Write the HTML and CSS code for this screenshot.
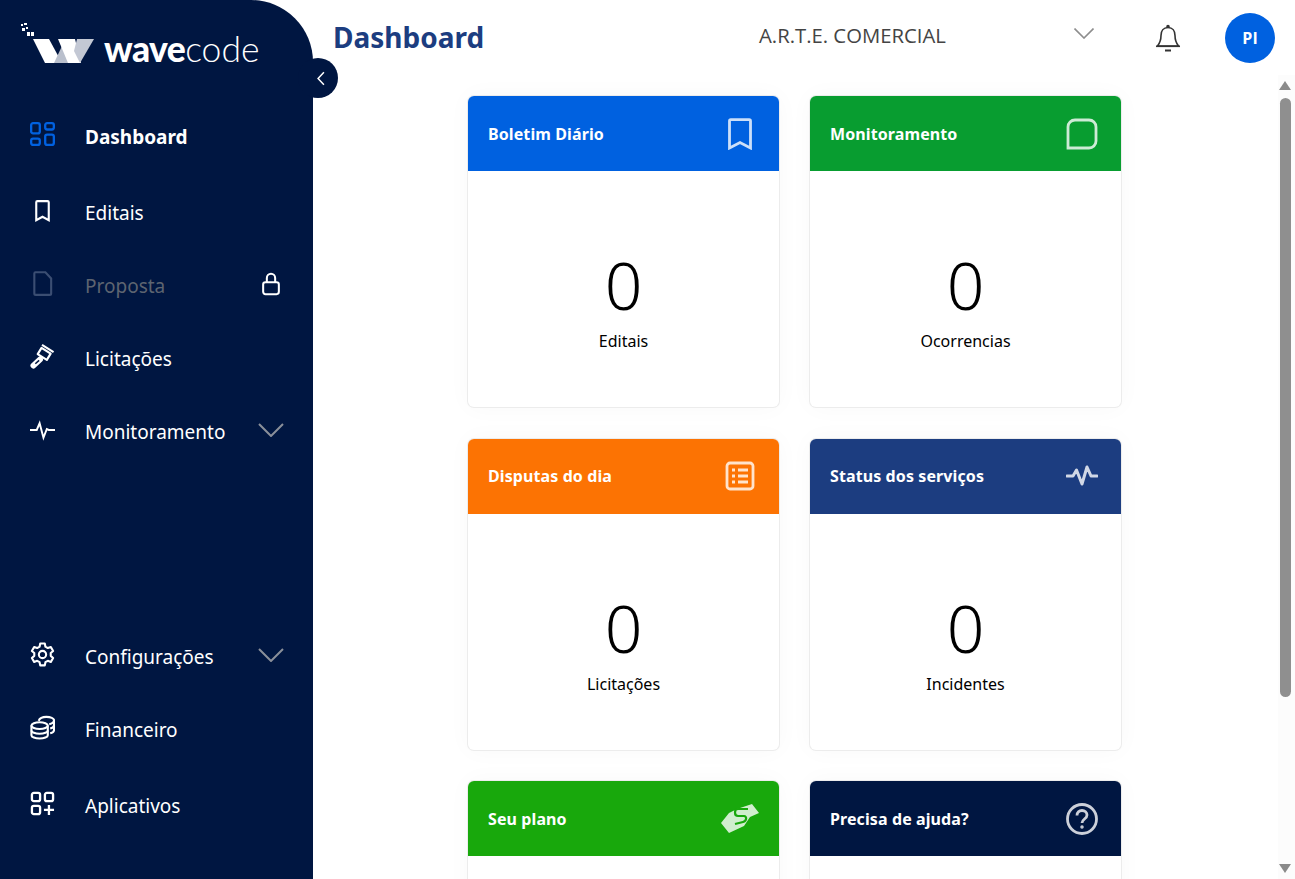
FILE: index.html
```html
<!DOCTYPE html>
<html lang="pt-BR">
<head>
<meta charset="UTF-8">
<meta name="viewport" content="width=device-width, initial-scale=1.0">
<title>Dashboard - wavecode</title>
<link rel="stylesheet" href="styles.css">
</head>
<body>

<aside class="sidebar">
  <div class="logo">
    <svg class="logo-dots" viewBox="0 0 13 13" fill="#fff">
      <rect x="0" y="1" width="2" height="2"/><rect x="3" y="0" width="3" height="2"/><rect x="1" y="5" width="3" height="3"/>
      <rect x="5" y="4" width="2" height="2"/><rect x="6" y="9" width="3" height="4"/><rect x="10" y="9" width="3" height="4"/>
    </svg>
    <svg class="logo-mark" viewBox="0 0 61 24">
      <polygon points="0,0 16,0 29,24 12,24" fill="#fff"/>
      <polygon points="21,24 29,7 37,24" fill="#b9bfcc"/>
      <polygon points="25,0 42,0 48,24 35,24" fill="#fff"/>
      <polygon points="44,0 61,0 47,24 41,12" fill="#c3c8d4"/>
    </svg>
    <span class="logo-text"><b>wave</b>code</span>
  </div>
  <button class="collapse-btn">
    <svg viewBox="0 0 12 20" width="10" height="17" fill="none" stroke="#fff" stroke-width="1.8"><path d="M9.5 2.5 2.5 10l7 7.5"/></svg>
  </button>

  <nav class="menu">
    <a class="menu-item active first">
      <svg class="menu-icon" viewBox="0 0 26 26" fill="none" stroke="#0061e0" stroke-width="2.4">
        <rect x="1.2" y="1.2" width="9" height="10.6" rx="2"/><rect x="15.8" y="1.2" width="9" height="6.6" rx="2"/>
        <rect x="1.2" y="17.2" width="9" height="6.6" rx="2"/><rect x="15.8" y="13.2" width="9" height="10.6" rx="2"/>
      </svg>
      <span>Dashboard</span>
    </a>
    <a class="menu-item">
      <svg class="menu-icon" viewBox="0 0 26 26" fill="none" stroke="#fff" stroke-width="2.2"><path d="M6.5 4.5c0-.8.5-1.2 1.2-1.2h10.6c.7 0 1.2.4 1.2 1.2V23L13 19.5 6.5 23z"/></svg>
      <span>Editais</span>
    </a>
    <a class="menu-item disabled">
      <svg class="menu-icon" viewBox="0 0 26 26" fill="none" stroke="#3b4e72" stroke-width="2.2"><path d="M4.5 2.5c0-.6.4-1.2 1.2-1.2H16l6 6.5v15.500c0 1-.7 1.500-1.500 1.500H6c-1 0-1.500-.6-1.500-1.500z"/></svg>
      <span>Proposta</span>
      <svg class="menu-end" viewBox="0 0 26 26" fill="none" stroke="#fff" stroke-width="2.2"><rect x="4.5" y="11" width="17" height="13" rx="2.5"/><path d="M8.5 11V6.5a4.5 4.5 0 0 1 9 0V11"/></svg>
    </a>
    <a class="menu-item">
      <svg class="menu-icon" viewBox="0 0 26 26" fill="none" stroke="#fff" stroke-width="2.2" stroke-linejoin="round">
        <path d="M12 4l9.500 6-4 6.500L8 10.500z"/><path d="M12.500 1 24.500 8.500"/>
        <path d="M3.500 22.500l7-6.500" stroke-width="6" stroke-linecap="round"/>
        <path d="M5.500 20.500l4-3.500" stroke="#001641" stroke-width="1.600"/>
      </svg>
      <span>Licitações</span>
    </a>
    <a class="menu-item">
      <svg class="menu-icon" viewBox="0 0 26 26" fill="none" stroke="#fff" stroke-width="2"><path d="M0 13.500h7l3-7 4 15 3.500-9 2 1H26"/></svg>
      <span>Monitoramento</span>
      <svg class="menu-chevron" viewBox="0 0 26 14" fill="none" stroke="#8a8f9a" stroke-width="2"><path d="M1 1l12 12L25 1"/></svg>
    </a>
  </nav>

  <nav class="menu menu-bottom">
    <a class="menu-item">
      <svg class="menu-icon" viewBox="0 0 24 24" fill="none" stroke="#fff" stroke-width="2" stroke-linejoin="round">
        <circle cx="12" cy="12" r="3.5"/>
        <path d="M9.800 1.500h4.400l.6 3 2.300 1.300 2.900-1 2.200 3.800-2.300 2v2.700l2.300 2-2.200 3.800-2.900-1-2.300 1.300-.6 3H9.800l-.6-3-2.300-1.300-2.900 1-2.200-3.800 2.300-2v-2.700l-2.300-2L4 4.800l2.900 1 2.300-1.300z"/>
      </svg>
      <span>Configurações</span>
      <svg class="menu-chevron" viewBox="0 0 26 14" fill="none" stroke="#8a8f9a" stroke-width="2"><path d="M1 1l12 12L25 1"/></svg>
    </a>
    <a class="menu-item">
      <svg class="menu-icon" viewBox="0 0 26 26" fill="none" stroke="#fff" stroke-width="2.2">
        <ellipse cx="10" cy="11" rx="8.5" ry="3.5"/><path d="M1.500 11v10c0 2 3.800 3.500 8.500 3.500s8.500-1.500 8.500-3.500V11"/><path d="M1.500 16c0 2 3.800 3.500 8.500 3.500s8.500-1.500 8.500-3.500"/>
        <path d="M9 6c1-2.500 4-4 8-4 4.500 0 8 1.500 8 3.500S23 9 20 9.500"/><path d="M21 14c2.500-.5 4-1.500 4-3.500M21 19c2.500-.5 4-1.500 4-3.500V5.500"/>
      </svg>
      <span>Financeiro</span>
    </a>
    <a class="menu-item last">
      <svg class="menu-icon" viewBox="0 0 26 26" fill="none" stroke="#fff" stroke-width="2.4">
        <rect x="2" y="2" width="8.5" height="8.5" rx="2"/><rect x="15.5" y="2" width="8.5" height="8.5" rx="2"/>
        <rect x="2" y="15.5" width="8.5" height="8.5" rx="2"/><path d="M19.700 14.500v10.500M14.500 19.700H25"/>
      </svg>
      <span>Aplicativos</span>
    </a>
  </nav>
</aside>

<div class="main">
  <header class="topbar">
    <h1>Dashboard</h1>
    <div class="company">
      <span>A.R.T.E. COMERCIAL</span>
      <svg viewBox="0 0 20 11" width="20" height="11" fill="none" stroke="#8d8d8d" stroke-width="1.6"><path d="M.5.500 10 10 19.500.500"/></svg>
    </div>
    <svg class="bell" viewBox="0 0 26 28" fill="none" stroke="#333" stroke-width="1.6">
      <path d="M13 3.500c-4.500 0-7 3.500-7 8 0 5-1.500 8-3.500 10.500h21c-2-2.500-3.500-5.500-3.500-10.500 0-4.500-2.500-8-7-8z"/>
      <path d="M1 22.300h24"/><circle cx="13" cy="2.500" r="1" fill="#333"/><path d="M10 26.500h6" stroke-width="2"/>
    </svg>
    <div class="avatar">PI</div>
  </header>

  <div class="workspace">
    <div class="content">
      <div class="cards">
        <section class="card">
          <div class="card-head blue">
            <h2>Boletim Diário</h2>
            <svg class="card-icon" viewBox="0 0 32 32" fill="none" stroke-width="2.8"><path d="M5.500 3c0-.8.500-1.300 1.300-1.300h18.400c.8 0 1.300.5 1.300 1.300v27L16 24.500 5.500 30z"/></svg>
          </div>
          <div class="card-body"><strong>0</strong><span>Editais</span></div>
        </section>
        <section class="card">
          <div class="card-head green">
            <h2>Monitoramento</h2>
            <svg class="card-icon" viewBox="0 0 32 32" fill="none" stroke-width="2.8"><path d="M2 30V9a7 7 0 0 1 7-7h14a7 7 0 0 1 7 7v14a7 7 0 0 1-7 7z"/></svg>
          </div>
          <div class="card-body"><strong>0</strong><span>Ocorrencias</span></div>
        </section>
        <section class="card">
          <div class="card-head orange">
            <h2>Disputas do dia</h2>
            <svg class="card-icon" viewBox="0 0 32 32" fill="none" stroke-width="2.8">
              <rect x="3" y="3" width="26" height="26" rx="3"/><path d="M8 10h3M14 10h10M8 16h3M14 16h10M8 22h3M14 22h10"/>
            </svg>
          </div>
          <div class="card-body"><strong>0</strong><span>Licitações</span></div>
        </section>
        <section class="card">
          <div class="card-head navy">
            <h2>Status dos serviços</h2>
            <svg class="card-icon" viewBox="0 0 32 32" fill="none" stroke-width="3" stroke-linecap="round" stroke-linejoin="round"><path d="M1 16h6l3.500-6 5.500 14 5-17 4 9h6"/></svg>
          </div>
          <div class="card-body"><strong>0</strong><span>Incidentes</span></div>
        </section>
        <section class="card">
          <div class="card-head lime">
            <h2>Seu plano</h2>
            <svg class="card-icon hand" viewBox="0 0 38 32">
              <path d="M31 1l7 9-9 4-6 9-15 7-8-10 8-10 8-4z"/>
              <path class="hand-line" d="M27 6H17c-4 0-4 7 0 7h6c3 0 3 5-1 6l-8 2"/>
            </svg>
          </div>
          <div class="card-body"></div>
        </section>
        <section class="card">
          <div class="card-head dark">
            <h2>Precisa de ajuda?</h2>
            <svg class="card-icon" viewBox="0 0 32 32" fill="none" stroke-width="2.8">
              <circle cx="16" cy="16" r="14.5"/><path d="M11 12.500c0-3 2.200-5 5-5s5 2 5 4.500c0 4-5 4-5 8"/><circle cx="16" cy="24" r="1" stroke-width="1.5"/>
            </svg>
          </div>
          <div class="card-body"></div>
        </section>
      </div>
    </div>
    <div class="scrollbar">
      <div class="scroll-up"></div>
      <div class="scroll-thumb"></div>
      <div class="scroll-down"></div>
    </div>
  </div>
</div>

</body>
</html>
```

FILE: styles.css
```css
* {
  box-sizing: border-box;
}

body {
  display: flex;
  height: 100vh;
  margin: 0;
  overflow: hidden;
  font-family: "Noto Sans", "Open Sans", sans-serif;
  background-color: #fff;
  color: #000;
}

.sidebar {
  position: relative;
  display: flex;
  flex-direction: column;
  flex: 0 0 313px;
  background-color: #001641;
  border-top-right-radius: 62px;
  color: #fff;
}

.logo {
  position: relative;
  display: flex;
  align-items: center;
  height: 105px;
  padding: 0 0 7px 33px;
}

.logo-dots {
  position: absolute;
  top: 23px;
  left: 21px;
  width: 13px;
  height: 13px;
}

.logo-mark {
  width: 61px;
  height: 24px;
  margin-right: 10px;
  margin-top: 3px;
}

.logo-text {
  font-family: "Lato", sans-serif;
  font-size: 35.5px;
  font-weight: 300;
  line-height: 1;
}

.logo-text b {
  font-weight: 900;
  letter-spacing: -0.6px;
}

.collapse-btn {
  position: absolute;
  top: 58px;
  left: 298px;
  display: flex;
  align-items: center;
  width: 40px;
  height: 40px;
  padding: 0 0 0 18px;
  border: 0;
  border-radius: 50%;
  background-color: #001641;
}

.menu {
  display: flex;
  flex-direction: column;
}

.menu-bottom {
  margin-top: auto;
  padding-bottom: 37px;
}

.menu-item {
  display: flex;
  align-items: center;
  height: 73px;
  padding: 0 30px;
  font-size: 19px;
  color: #fff;
}

.menu-item.first {
  height: 64px;
  margin-bottom: 7px;
}

.menu-item.last {
  margin-top: 3px;
}

.menu-item.active {
  font-weight: 700;
}

.menu-item.disabled {
  color: #5d6470;
}

.menu-icon {
  flex: 0 0 25px;
  width: 25px;
  height: 25px;
  margin-right: 30px;
  margin-bottom: 5px;
}

.menu-end {
  width: 24px;
  height: 24px;
  margin-left: auto;
  margin-bottom: 4px;
}

.menu-chevron {
  width: 26px;
  height: 14px;
  margin-left: auto;
  margin-right: -1px;
  margin-bottom: 4px;
}

.main {
  display: flex;
  flex-direction: column;
  flex: 1;
  min-width: 0;
}

.topbar {
  display: flex;
  align-items: center;
  flex: 0 0 75px;
  padding: 0 20px;
}

.topbar h1 {
  margin: 0 0 2px;
  font-size: 28px;
  font-weight: 700;
  color: #1c3d80;
}

.company {
  display: flex;
  align-items: center;
  justify-content: space-between;
  width: 335px;
  margin-left: auto;
  margin-right: 61px;
  margin-bottom: 6px;
  font-family: "Open Sans", sans-serif;
  font-size: 20.3px;
  color: #444;
}

.company svg {
  margin-bottom: 3px;
}

.bell {
  width: 26px;
  height: 28px;
  margin-right: 44px;
}

.avatar {
  display: flex;
  align-items: center;
  justify-content: center;
  width: 50px;
  height: 50px;
  border-radius: 50%;
  background-color: #0061e0;
  color: #fff;
  font-family: "Open Sans", sans-serif;
  font-size: 16px;
  font-weight: 700;
}

.workspace {
  display: flex;
  flex: 1;
  min-height: 0;
}

.content {
  flex: 1;
  min-width: 0;
  padding: 21px 2px 0 0;
  overflow: hidden;
}

.scrollbar {
  display: flex;
  flex-direction: column;
  flex: 0 0 17px;
  padding: 6px 0 6px 1px;
  background-color: #fcfcfc;
}

.scroll-up,
.scroll-down {
  width: 0;
  height: 0;
  border-left: 6.5px solid transparent;
  border-right: 6.5px solid transparent;
}

.scroll-up {
  border-bottom: 9px solid #8a8a8a;
}

.scroll-down {
  margin-top: auto;
  border-top: 9px solid #8a8a8a;
}

.scroll-thumb {
  width: 11px;
  height: 599px;
  margin: 8px 0 0 1px;
  border-radius: 6px;
  background-color: #8f8f8f;
}

.cards {
  display: grid;
  grid-template-columns: 311px 311px;
  grid-auto-rows: 311px;
  gap: 31.5px 31px;
  justify-content: center;
}

.card {
  display: flex;
  flex-direction: column;
  border-radius: 6px;
  background-color: #fff;
  box-shadow: 0 0 0 1px #ececec, 0 0 24px rgba(0, 0, 0, 0.03);
}

.card-head {
  display: flex;
  align-items: center;
  justify-content: space-between;
  flex: 0 0 75px;
  padding: 0 23px 0 20px;
  border-radius: 6px 6px 0 0;
  color: #fff;
}

.card-head h2 {
  margin: 0;
  font-size: 16px;
  font-weight: 700;
  letter-spacing: 0.1px;
}

.card-icon {
  width: 32px;
  height: 32px;
  stroke: rgba(255, 255, 255, 0.8);
}

.hand {
  width: 38px;
  margin-right: -3px;
  fill: rgba(255, 255, 255, 0.8);
  stroke: none;
}

.hand-line {
  fill: none;
  stroke: #18a80c;
  stroke-width: 2.2;
}

.blue { background-color: #0061e0; }
.green { background-color: #089d30; }
.orange { background-color: #fc7303; }
.navy { background-color: #1c3d80; }
.lime { background-color: #18a80c; }
.dark { background-color: #001641; }

.card-body {
  display: flex;
  flex-direction: column;
  align-items: center;
  flex: 1;
  padding-top: 73px;
}

.card-body strong {
  font-size: 66px;
  font-weight: 350;
  line-height: 80px;
}

.card-body span {
  margin-top: 5px;
  font-size: 16px;
  line-height: 24px;
}
```
